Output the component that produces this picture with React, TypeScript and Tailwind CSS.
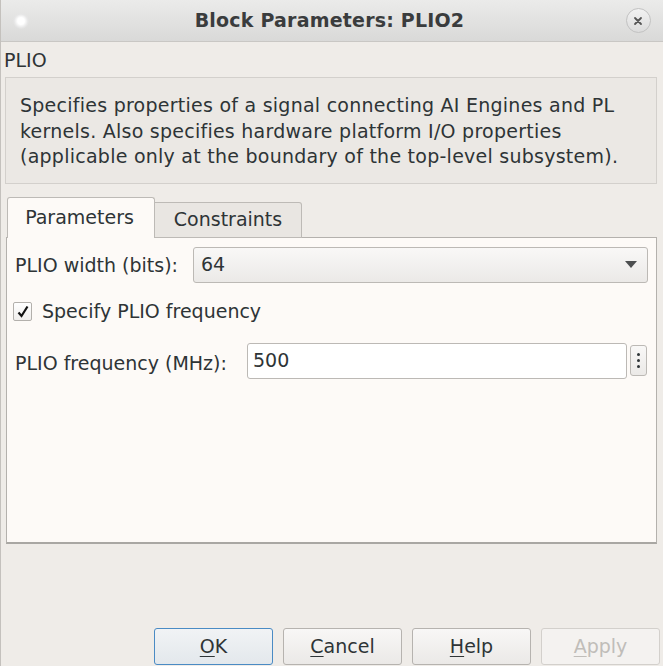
import React from 'react';

const font = { fontFamily: '"DejaVu Sans", "Liberation Sans", sans-serif' };

// small underlined mnemonic letter
const Mn: React.FC<{ c: string }> = ({ c }) => <span className="underline underline-offset-[3px]">{c}</span>;

const DialogButton: React.FC<{ children: React.ReactNode; variant?: 'default' | 'focus' | 'disabled' }> = ({
  children,
  variant = 'default',
}) => {
  const cls =
    variant === 'focus'
      ? 'border-[#4a8bc4] bg-gradient-to-b from-[#f1f3f5] to-[#e3e8ec] text-[#2e3436]'
      : variant === 'disabled'
      ? 'border-[#d3d0cc] bg-[#f4f2f0] text-[#c0bdb9]'
      : 'border-[#b6b3af] bg-gradient-to-b from-[#f8f7f6] to-[#ebe9e7] text-[#2e3436]';
  return (
    <button className={`w-[119px] h-[37px] rounded-[3px] border flex items-center justify-center ${cls}`}>
      {children}
    </button>
  );
};

export default function App() {
  return (
    <div
      className="w-[663px] h-[666px] overflow-hidden bg-[#efece8] border-l border-[#c4c1bd] flex flex-col text-[19px] text-[#2e3436]"
      style={font}
    >
      {/* title bar */}
      <div className="h-[42px] shrink-0 flex items-center justify-between px-[12px] bg-gradient-to-b from-[#ebebea] to-[#d9d9d8] border-b border-[#c9c7c4]">
        <div className="w-[16px] h-[16px] rounded-full bg-[radial-gradient(circle,#ffffff_30%,#e6e6e6_60%,transparent_75%)]" />
        <div className="font-bold text-[19px] text-[#3a3c3d] tracking-[0.2px] pl-[4px]">Block Parameters: PLIO2</div>
        <div className="w-[25px] h-[25px] rounded-full border border-[#c2c2c2] bg-gradient-to-b from-[#f2f2f2] to-[#dcdcdc] flex items-center justify-center">
          <svg width="10" height="10" viewBox="0 0 10 10">
            <path d="M2 2 L8 8 M8 2 L2 8" stroke="#555" strokeWidth="1.8" strokeLinecap="round" />
          </svg>
        </div>
      </div>

      <div className="pl-[3px] mt-[7px] h-[22px] leading-[22px]">PLIO</div>

      {/* description */}
      <div className="ml-[4px] mr-[6px] mt-[6px] border border-[#d3d0cc] bg-[#ebe8e4] pl-[14px] pr-[6px] pt-[15px] pb-[13px] leading-[25.5px] tracking-[0.25px] text-[#2e3436]">
        Specifies properties of a signal connecting AI Engines and PL kernels. Also specifies hardware platform I/O
        properties (applicable only at the boundary of the top-level subsystem).
      </div>

      {/* tabs */}
      <div className="ml-[6px] mt-[13px] flex items-end h-[41px] relative z-10">
        <div className="w-[148px] h-[41px] border border-b-0 border-[#bdbab6] rounded-t-[3px] bg-[#fdfaf7] flex items-center justify-center pb-[1px] pr-[3px]">
          Parameters
        </div>
        <div className="w-[147px] h-[36px] border border-l-0 border-[#bdbab6] rounded-tr-[3px] bg-[#e9e6e2] flex items-center justify-center">
          Constraints
        </div>
      </div>

      {/* tab panel */}
      <div className="ml-[5px] mr-[6px] -mt-px h-[307px] border border-[#b4b1ad] border-b-2 border-b-[#a9a7a3] bg-[#fdfaf7] pt-[9px] pl-[8px] pr-[8px] flex flex-col">
        <div className="flex items-center h-[36px]">
          <span className="w-[178px] pt-[1px]">PLIO width (bits):</span>
          <div className="flex-1 h-[36px] rounded-[3px] border border-[#bcb9b5] bg-gradient-to-b from-[#f9f8f7] to-[#ebe9e7] flex items-center justify-between pl-[7px] pr-[10px]">
            <span>64</span>
            <svg width="12" height="7" viewBox="0 0 12 7">
              <path d="M0 0 L12 0 L6 7 Z" fill="#4d4f50" />
            </svg>
          </div>
        </div>

        <div className="flex items-center h-[20px] mt-[19px] -ml-[2px]">
          <div className="w-[19px] h-[19px] border border-[#b3b0ac] rounded-[2px] bg-gradient-to-b from-white to-[#f0eeec] flex items-center justify-center">
            <svg width="12" height="13" viewBox="0 0 12 13">
              <path d="M1.5 7.5 L4.5 11 L10.5 1.5" stroke="#111" strokeWidth="2.2" fill="none" strokeLinejoin="miter" />
            </svg>
          </div>
          <span className="ml-[10px]">Specify PLIO frequency</span>
        </div>

        <div className="flex items-center h-[36px] mt-[21px]">
          <span className="w-[232px] pt-[5px]">PLIO frequency (MHz):</span>
          <div className="flex-1 h-[36px] rounded-[3px] border border-[#bcb9b5] bg-white flex items-center pl-[5px]">
            500
          </div>
          <div className="ml-[3px] w-[17px] h-[31px] rounded-[3px] border border-[#bcb9b5] bg-gradient-to-b from-[#f9f8f7] to-[#ebe9e7] flex flex-col items-center justify-center gap-[3px] mr-[1px]">
            <span className="w-[3px] h-[3px] rounded-full bg-[#2e3436]" />
            <span className="w-[3px] h-[3px] rounded-full bg-[#2e3436]" />
            <span className="w-[3px] h-[3px] rounded-full bg-[#2e3436]" />
          </div>
        </div>
      </div>

      <div className="flex-1" />

      {/* buttons */}
      <div className="flex justify-end gap-[10px] pr-[3px] pb-px">
        <DialogButton variant="focus">
          <Mn c="O" />K
        </DialogButton>
        <DialogButton>
          <Mn c="C" />ancel
        </DialogButton>
        <DialogButton>
          <Mn c="H" />elp
        </DialogButton>
        <DialogButton variant="disabled">
          <Mn c="A" />pply
        </DialogButton>
      </div>
    </div>
  );
}
